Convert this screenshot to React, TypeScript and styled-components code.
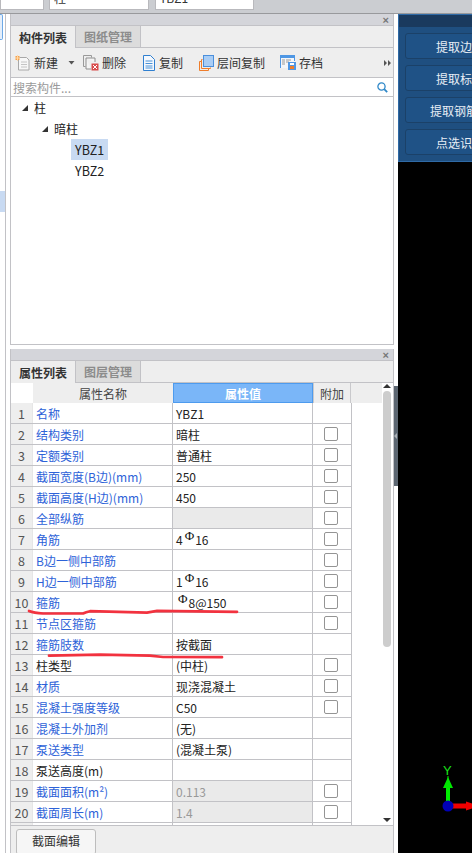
import React from "react";
import styled, { createGlobalStyle } from "styled-components";

const Global = createGlobalStyle`
  html, body { margin: 0; padding: 0; background: #fff; }
  * { box-sizing: border-box; }
  body { font-family: "Noto Sans CJK SC", "Liberation Sans", sans-serif; font-size: 12px; color: #333; }
`;

const Page = styled.div`
  position: relative; width: 472px; height: 853px; overflow: hidden; display: flex; flex-direction: column; background: #fff;
`;
const TopBar = styled.div`
  height: 14px; flex: none; background: #cbcdd1; border-bottom: 1px solid #98999c; display: flex; padding-right: 0;
`;
const TopField = styled.div<{ $w: number; $ml: number }>`
  width: ${p => p.$w}px; margin-left: ${p => p.$ml}px; height: 10px; background: #fff; border: 1px solid #b9b9bd; border-top: 0; overflow: hidden;
  font-size: 12px; line-height: 8px; color: #333; padding-left: 4px; white-space: nowrap;
  span { position: relative; top: -6px; }
`;
const Main = styled.div`
  flex: 1; min-height: 0; display: flex;
`;
const Rail = styled.div`
  width: 6px; flex: none; border-right: 1px solid #c2c2c6; display: flex; flex-direction: column;
`;
const RailTab = styled.div`
  width: 3px; height: 26px; background: #e4eefa; border: 1px solid #6ea9e6; border-left: 0; border-radius: 0 2px 2px 0;
`;
const RailSelected = styled.div`
  width: 5px; height: 21px; margin-top: 151px; background: #c8daf2;
`;
const Panels = styled.div`
  width: 384px; margin-left: 4px; flex: none; display: flex; flex-direction: column; gap: 4px;
`;
const Panel = styled.section<{ $h?: number }>`
  display: flex; flex-direction: column; border: 1px solid #c2c2c6; border-top: 0; background: #fff;
  ${p => (p.$h ? `height: ${p.$h}px; flex: none;` : "flex: 1; min-height: 0; border-bottom: 0;")}
`;
const TitleBar = styled.div`
  height: 12px; flex: none; background: #d4d5da; border-bottom: 1px solid #c2c2c6; display: flex; justify-content: flex-end; align-items: center; padding-right: 4px;
`;
const Close = styled.span`
  color: #777; font-size: 11px; font-weight: 700; line-height: 10px; font-family: "Liberation Sans", sans-serif;
`;
const Tabs = styled.div`
  height: 22px; flex: none; background: #eee; display: flex; border-bottom: 1px solid #c2c2c6;
`;
const Tab = styled.div<{ $active?: boolean }>`
  width: 65px; height: ${p => (p.$active ? 22 : 21)}px; display: flex; align-items: center; justify-content: center; font-weight: 700; font-size: 12px;
  color: ${p => (p.$active ? "#333" : "#8c8c8c")}; background: ${p => (p.$active ? "#eee" : "#dcdcdc")};
  border-right: 1px solid #c2c2c6;
`;
const Toolbar = styled.div`
  height: 30px; flex: none; background: #eee; border-bottom: 1px solid #c2c2c6; display: flex; align-items: center; padding-left: 4px; color: #333; position: relative;
`;
const Tool = styled.div<{ $w: number }>`
  width: ${p => p.$w}px; flex: none; display: flex; align-items: center; gap: 3px; white-space: nowrap;
  svg { flex: none; }
`;
const CaretSlot = styled.span`
  margin-left: 7px; display: flex;
`;
const More = styled.div`
  margin-left: auto; margin-right: 2px; display: flex;
`;
const SearchBar = styled.div`
  height: 19px; flex: none; border-bottom: 1px solid #c2c2c6; display: flex; align-items: center; justify-content: space-between; padding: 0 5px 0 2px; color: #9a9a9a;
`;
const Tree = styled.div`
  flex: 1; padding-top: 0; display: flex; flex-direction: column;
`;
const TreeRow = styled.div<{ $indent: number }>`
  height: 21px; display: flex; align-items: center; padding-left: ${p => p.$indent}px; gap: 6px; color: #222;
`;
const Selected = styled.span<{ $on?: boolean }>`
  display: flex; align-items: center; height: 21px; padding: 0 4px; background: ${p => (p.$on ? "#c8daf2" : "transparent")}; color: #222; font-size: 12.5px;
`;
const TableArea = styled.div`
  flex: 1; min-height: 0; display: flex; overflow: hidden;
`;
const Table = styled.div`
  width: 371px; flex: none; display: flex; flex-direction: column; overflow: hidden; background: #fff;
`;
const HeadRow = styled.div`
  height: 20px; flex: none; display: grid; grid-template-columns: 22px 140px 140px 38px 31px; border-top: 0;
`;
const HeadCell = styled.div<{ $blue?: boolean }>`
  display: flex; align-items: center; justify-content: center; font-size: 12px;
  background: ${p => (p.$blue ? "#7ab6f8" : "#eee")};
  color: ${p => (p.$blue ? "#fff" : "#444")};
  font-weight: ${p => (p.$blue ? 700 : 400)};
  ${p => p.$blue && "border: 1px solid #4d9bee;"}
`;
const HeadBlank = styled.div`
  background: #fff;
`;
const HeadAdd = styled(HeadCell)`
  border: 1px solid #c9c9cc; border-bottom: 0; border-top: 0;
`;
const HeadRest = styled.div`
  background: #eee;
`;
const Row = styled.div`
  height: 21px; flex: none; display: grid; grid-template-columns: 22px 140px 140px 39px; width: 341px; border-bottom: 1px solid #c2c2c6;
`;
const NumCell = styled.div`
  background: #eee; color: #555; display: flex; align-items: center; justify-content: center; font-size: 12.5px; border-right: 1px solid #e6e6e6;
`;
const NameCell = styled.div<{ $plain?: boolean }>`
  padding-left: 3px; display: flex; align-items: center; white-space: nowrap; overflow: hidden; font-size: 12px;
  color: ${p => (p.$plain ? "#222" : "#2d62d8")}; border-right: 1px solid #c2c2c6;
`;
const ValueCell = styled.div<{ $locked?: boolean }>`
  padding-left: 3px; display: flex; align-items: center; white-space: nowrap; overflow: hidden; font-size: 12px;
  background: ${p => (p.$locked ? "#eaeaea" : "#fff")}; color: ${p => (p.$locked ? "#999" : "#222")}; border-right: 1px solid #c2c2c6;
`;
const Rebar = styled.span`
  font-family: "Liberation Serif", serif; font-size: 13px; line-height: 8px; position: relative; top: -3px; color: #111; margin: 0 1px 0 2px;
`;
const AddCell = styled.div`
  display: flex; align-items: center; justify-content: center; border-right: 1px solid #c2c2c6; padding-right: 3px;
`;
const Check = styled.span`
  width: 14px; height: 14px; border: 1px solid #949494; border-radius: 2px; background: #fff;
`;
const Scroll = styled.div`
  width: 8px; margin-left: 1px; flex: none; display: flex; flex-direction: column; align-items: center; padding-top: 1px;
`;
const Arrow = styled.div<{ $up?: boolean }>`
  flex: none; width: 0; height: 0; border-left: 4px solid transparent; border-right: 4px solid transparent;
  ${p => (p.$up ? "border-bottom: 4px solid #333;" : "border-top: 4px solid #333; margin-bottom: 3px;")}
`;
const Thumb = styled.div`
  width: 8px; height: 256px; margin-top: 3px; background: #cdcdcd; border-radius: 4px; flex: none;
`;
const Spacer = styled.div`
  flex: 1;
`;
const BottomBar = styled.div`
  height: 28px; flex: none; background: #eee; border-top: 1px solid #c2c2c6; padding: 3px 0 0 5px;
`;
const EditButton = styled.div`
  width: 80px; height: 26px; background: #f6f6f6; border: 1px solid #bdbdbd; border-radius: 3px; display: flex; align-items: center; justify-content: center; color: #333; padding-bottom: 3px;
`;
const Gutter = styled.div`
  width: 4px; flex: none; padding-top: 372px;
`;
const Handle = styled.div`
  height: 100px; background: #5d6772; display: flex; align-items: center;
  &::before { content: ""; border-right: 3px solid #aab0b6; border-top: 3px solid transparent; border-bottom: 3px solid transparent; }
`;
const Canvas = styled.div`
  position: relative; flex: 1; background: #000; overflow: hidden;
`;
const ToolPanel = styled.div`
  height: 148px; background: #1f4f80; border: 1px solid #2f6aa6; border-right: 0; overflow: hidden;
`;
const ToolHead = styled.div`
  height: 12px; background: #1a3a5e;
`;
const ToolList = styled.div`
  display: flex; flex-direction: column; gap: 6px; padding: 6px 0 0 6px;
`;
const ToolButton = styled.div`
  width: 110px; height: 26px; flex: none; background: #1f5286; border: 1px solid #1b4168; border-radius: 3px; color: #e8eef5; display: flex; align-items: center; justify-content: center; white-space: nowrap; font-size: 12px;
`;
const Gizmo = styled.svg`
  position: absolute; left: 442px; top: 760px; display: block;
`;
const Ink = styled.svg`
  position: absolute; left: 0; top: 0; pointer-events: none;
`;

const IconNew = () => (
  <svg width="16" height="16" viewBox="0 0 16 16">
    <path d="M3.5 2.5h8l2.5 2.5v10H3.5z" fill="#f7f7f7" stroke="#a8a8a8" />
    <path d="M6 7h6M6 9.5h6M6 12h6" stroke="#c4c4c4" />
    <path d="M0.5 1h4v4h-4z" fill="#f6a04a" />
    <path d="M2.5 0v6M0 3h5" stroke="#ffd9a8" />
  </svg>
);
const IconDelete = () => (
  <svg width="16" height="16" viewBox="0 0 16 16">
    <path d="M0.5 0.5h8v2" fill="none" stroke="#999" />
    <path d="M0.5 0.5v11h2" fill="none" stroke="#999" />
    <path d="M3 3h9v4M3 3v11h5" fill="#f4f4f4" stroke="#8e8e8e" />
    <path d="M8.5 8.5h7v7h-7z" fill="#d94a4a" />
    <path d="M10 10l4 4M14 10l-4 4" stroke="#fff" />
  </svg>
);
const IconCopy = () => (
  <svg width="14" height="16" viewBox="0 0 14 16">
    <path d="M1.5 0.5h7l4 4v11h-11z" fill="#f4f8fd" stroke="#2f7fd0" />
    <path d="M3.5 6h7M3.5 8.5h7M3.5 11h7M3.5 13h7" stroke="#4b93d8" />
  </svg>
);
const IconFloor = () => (
  <svg width="15" height="16" viewBox="0 0 15 16">
    <path d="M0.5 15.5v-9h2M0.5 15.5h9v-2" fill="none" stroke="#ee7d2b" />
    <path d="M2.5 13.5v-9h1M2.5 13.5h9v-1" fill="none" stroke="#ee7d2b" />
    <rect x="4.5" y="0.5" width="10" height="11" fill="#a9cdf5" stroke="#4a8fdc" />
  </svg>
);
const IconSave = () => (
  <svg width="16" height="15" viewBox="0 0 16 15">
    <rect x="0" y="0" width="15" height="13" fill="#f4f6f9" />
    <rect x="0" y="0" width="15" height="3" fill="#4f97e4" />
    <path d="M0.5 0v13M14.5 0v6" stroke="#4f97e4" />
    <path d="M2 5h3M2 7h3M2 9h3M6 5h5M6 7h3" stroke="#9a9a9a" />
    <rect x="8" y="7" width="8" height="8" fill="#4f97e4" />
    <rect x="10" y="11" width="4" height="3" fill="#ee7d2b" />
    <rect x="10" y="8" width="4" height="2" fill="#fff" />
  </svg>
);
const IconSearch = () => (
  <svg width="11" height="11" viewBox="0 0 11 11">
    <circle cx="4.5" cy="4.5" r="3.6" fill="none" stroke="#2f88c8" strokeWidth="1.3" />
    <path d="M7.2 7.2l3 3" stroke="#2f88c8" strokeWidth="1.8" />
  </svg>
);
const Caret = () => (
  <svg width="7" height="4" viewBox="0 0 7 4">
    <path d="M0.5 0h6l-3 3.5z" fill="#555" />
  </svg>
);
const Twin = () => (
  <svg width="7" height="6" viewBox="0 0 7 6">
    <path d="M0 0l3 3-3 3zM4 0l3 3-3 3z" fill="#555" />
  </svg>
);
const Expander = () => (
  <svg width="6" height="6" viewBox="0 0 6 6">
    <path d="M6 0v6H0z" fill="#333" />
  </svg>
);

type RowData = { name: string; value?: React.ReactNode; check?: boolean; plain?: boolean; locked?: boolean };
const R = () => <Rebar>Φ</Rebar>;
const rows: RowData[] = [
  { name: "名称", value: "YBZ1" },
  { name: "结构类别", value: "暗柱", check: true },
  { name: "定额类别", value: "普通柱", check: true },
  { name: "截面宽度(B边)(mm)", value: "250", check: true },
  { name: "截面高度(H边)(mm)", value: "450", check: true },
  { name: "全部纵筋", check: true, locked: true },
  { name: "角筋", value: <>4<R />16</>, check: true },
  { name: "B边一侧中部筋", check: true },
  { name: "H边一侧中部筋", value: <>1<R />16</>, check: true },
  { name: "箍筋", value: <><R />8@150</>, check: true },
  { name: "节点区箍筋", check: true },
  { name: "箍筋肢数", value: "按截面" },
  { name: "柱类型", value: "(中柱)", check: true, plain: true },
  { name: "材质", value: "现浇混凝土", check: true },
  { name: "混凝土强度等级", value: "C50", check: true },
  { name: "混凝土外加剂", value: "(无)" },
  { name: "泵送类型", value: "(混凝土泵)" },
  { name: "泵送高度(m)", plain: true },
  { name: "截面面积(m²)", value: "0.113", check: true, locked: true },
  { name: "截面周长(m)", value: "1.4", check: true, locked: true },
  { name: "" },
];

export default function App() {
  return (
    <Page>
      <Global />
      <TopBar>
        <TopField $w={44} $ml={0} />
        <TopField $w={100} $ml={5}><span>柱</span></TopField>
        <TopField $w={99} $ml={6}><span>YBZ1</span></TopField>
      </TopBar>
      <Main>
        <Rail>
          <RailTab />
          <RailSelected />
        </Rail>
        <Panels>
          <Panel $h={331}>
            <TitleBar><Close>×</Close></TitleBar>
            <Tabs>
              <Tab $active>构件列表</Tab>
              <Tab>图纸管理</Tab>
            </Tabs>
            <Toolbar>
              <Tool $w={68}><IconNew /><span>新建</span><CaretSlot><Caret /></CaretSlot></Tool>
              <Tool $w={59}><IconDelete /><span>删除</span></Tool>
              <Tool $w={57}><IconCopy /><span>复制</span></Tool>
              <Tool $w={81}><IconFloor /><span>层间复制</span></Tool>
              <Tool $w={60}><IconSave /><span>存档</span></Tool>
              <More><Twin /></More>
            </Toolbar>
            <SearchBar><span>搜索构件...</span><IconSearch /></SearchBar>
            <Tree>
              <TreeRow $indent={11}><Expander /><span>柱</span></TreeRow>
              <TreeRow $indent={31}><Expander /><span>暗柱</span></TreeRow>
              <TreeRow $indent={60}><Selected $on>YBZ1</Selected></TreeRow>
              <TreeRow $indent={60}><Selected>YBZ2</Selected></TreeRow>
            </Tree>
          </Panel>
          <Panel>
            <TitleBar><Close>×</Close></TitleBar>
            <Tabs>
              <Tab $active>属性列表</Tab>
              <Tab>图层管理</Tab>
            </Tabs>
            <TableArea>
              <Table>
                <HeadRow>
                  <HeadBlank />
                  <HeadCell>属性名称</HeadCell>
                  <HeadCell $blue>属性值</HeadCell>
                  <HeadAdd>附加</HeadAdd>
                  <HeadRest />
                </HeadRow>
                {rows.map((r, i) => (
                  <Row key={i}>
                    <NumCell>{r.name ? i + 1 : ""}</NumCell>
                    <NameCell $plain={r.plain}>{r.name}</NameCell>
                    <ValueCell $locked={r.locked}>{r.value}</ValueCell>
                    <AddCell>{r.check && <Check />}</AddCell>
                  </Row>
                ))}
              </Table>
              <Scroll>
                <Arrow $up />
                <Thumb />
                <Spacer />
                <Arrow />
              </Scroll>
            </TableArea>
            <BottomBar><EditButton>截面编辑</EditButton></BottomBar>
          </Panel>
        </Panels>
        <Gutter><Handle /></Gutter>
        <Canvas>
          <ToolPanel>
            <ToolHead />
            <ToolList>
              <ToolButton>提取边线</ToolButton>
              <ToolButton>提取标注</ToolButton>
              <ToolButton>提取钢筋线</ToolButton>
              <ToolButton>点选识别</ToolButton>
            </ToolList>
          </ToolPanel>
        </Canvas>
      </Main>
      <Gizmo width="30" height="70" viewBox="0 0 30 70">
        <text x="1" y="15" fontSize="13" fill="#18e018" fontFamily="Liberation Sans, sans-serif">Y</text>
        <path d="M5.5 16h1v30h-1z" fill="#00e600" />
        <rect x="4" y="26" width="4" height="20" fill="#00ee00" />
        <path d="M6 17l5 11H1z" fill="#00e600" />
        <rect x="8" y="43.5" width="18" height="5" fill="#f00000" />
        <path d="M24 41.5l6 2v5l-6 2z" fill="#f00000" />
        <circle cx="6" cy="46" r="5.5" fill="#0000b8" />
      </Gizmo>
      <Ink width="472" height="853" viewBox="0 0 472 853">
        <path d="M29 611 Q34 613 43 613.5 L83 613.5 Q86 612 90 611.2 L147 612.6 L157 610.8 L237 611.8" fill="none" stroke="#f2323f" strokeWidth="2.7" strokeLinecap="round" />
        <path d="M49 655.6 L100 654.6 L150 655.6 L163 657 L222 657.2" fill="none" stroke="#f2323f" strokeWidth="2.7" strokeLinecap="round" />
      </Ink>
    </Page>
  );
}
